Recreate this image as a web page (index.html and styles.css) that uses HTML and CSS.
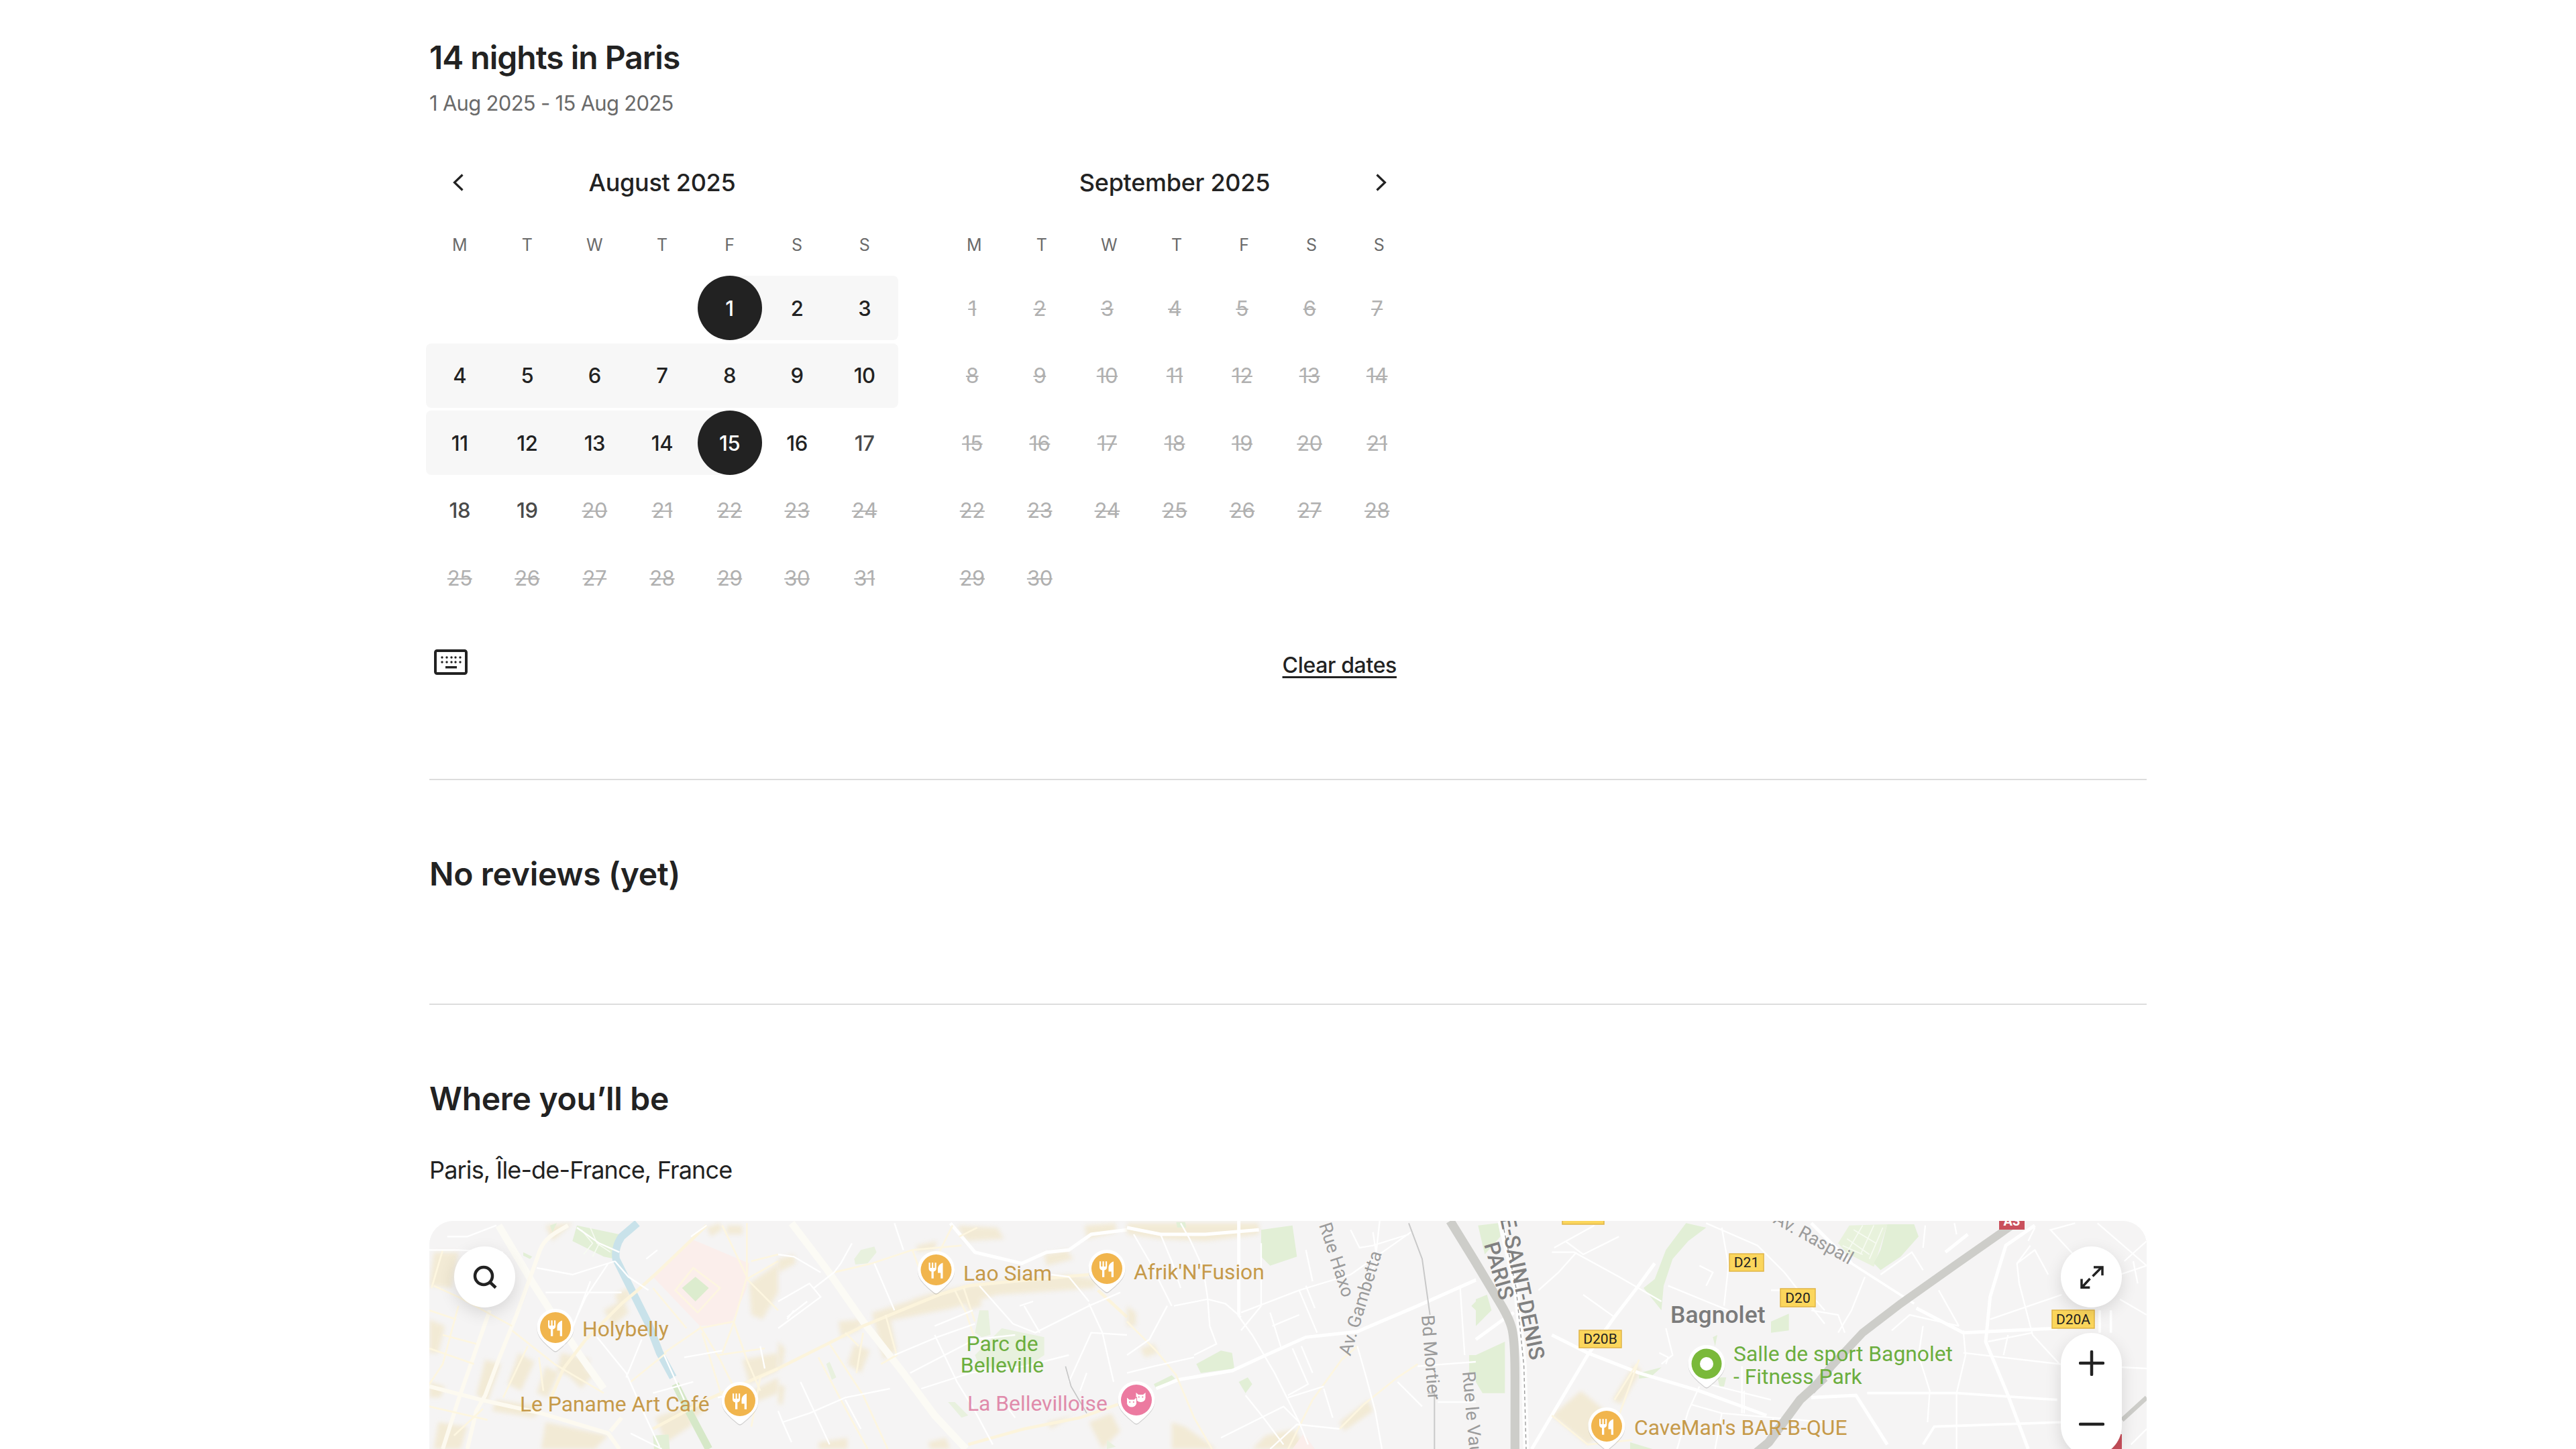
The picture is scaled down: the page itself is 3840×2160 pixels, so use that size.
FILE: index.html
```html
<!DOCTYPE html>
<html lang="en">
<head>
<meta charset="utf-8">
<title>14 nights in Paris</title>
<link rel="stylesheet" href="styles.css">
</head>
<body>
<main class="page">
  <h2 class="heading heading-title">14 nights in Paris</h2>
  <p class="subtitle">1 Aug 2025 - 15 Aug 2025</p>

  <div class="months">
    <section class="month">
      <header class="month-head">
        <svg class="chev chev-left" viewBox="0 0 16 26"><path d="M14.5 1.500 2.500 13l12 11.500"/></svg>
        <span>August 2025</span>
      </header>
      <div class="week"><span>M</span><span>T</span><span>W</span><span>T</span><span>F</span><span>S</span><span>S</span></div>
      <div class="days">
        <span class="d"></span><span class="d"></span><span class="d"></span><span class="d"></span>
        <span class="d start"><b class="sel">1</b></span>
        <span class="d range"><b>2</b></span>
        <span class="d range re"><b>3</b></span>
        <span class="d range le"><b>4</b></span><span class="d range"><b>5</b></span><span class="d range"><b>6</b></span><span class="d range"><b>7</b></span><span class="d range"><b>8</b></span><span class="d range"><b>9</b></span><span class="d range re"><b>10</b></span>
        <span class="d range le"><b>11</b></span><span class="d range"><b>12</b></span><span class="d range"><b>13</b></span><span class="d range"><b>14</b></span>
        <span class="d end"><b class="sel">15</b></span>
        <span class="d"><b>16</b></span><span class="d"><b class="soft">17</b></span>
        <span class="d"><b class="soft">18</b></span><span class="d"><b class="soft">19</b></span>
        <span class="d"><s>20</s></span><span class="d"><s>21</s></span><span class="d"><s>22</s></span><span class="d"><s>23</s></span><span class="d"><s>24</s></span>
        <span class="d"><s>25</s></span><span class="d"><s>26</s></span><span class="d"><s>27</s></span><span class="d"><s>28</s></span><span class="d"><s>29</s></span><span class="d"><s>30</s></span><span class="d"><s>31</s></span>
      </div>
    </section>
    <section class="month">
      <header class="month-head">
        <span>September 2025</span>
        <svg class="chev chev-right" viewBox="0 0 16 26"><path d="M1.500 1.500 13.500 13l-12 11.500"/></svg>
      </header>
      <div class="week week-shift"><span>M</span><span>T</span><span>W</span><span>T</span><span>F</span><span>S</span><span>S</span></div>
      <div class="days">
        <span class="d"><s>1</s></span><span class="d"><s>2</s></span><span class="d"><s>3</s></span><span class="d"><s>4</s></span><span class="d"><s>5</s></span><span class="d"><s>6</s></span><span class="d"><s>7</s></span>
        <span class="d"><s>8</s></span><span class="d"><s>9</s></span><span class="d"><s>10</s></span><span class="d"><s>11</s></span><span class="d"><s>12</s></span><span class="d"><s>13</s></span><span class="d"><s>14</s></span>
        <span class="d"><s>15</s></span><span class="d"><s>16</s></span><span class="d"><s>17</s></span><span class="d"><s>18</s></span><span class="d"><s>19</s></span><span class="d"><s>20</s></span><span class="d"><s>21</s></span>
        <span class="d"><s>22</s></span><span class="d"><s>23</s></span><span class="d"><s>24</s></span><span class="d"><s>25</s></span><span class="d"><s>26</s></span><span class="d"><s>27</s></span><span class="d"><s>28</s></span>
        <span class="d"><s>29</s></span><span class="d"><s>30</s></span>
      </div>
    </section>
  </div>

  <div class="cal-foot">
    <svg class="kbd" viewBox="0 0 50 38">
      <rect class="kbd-frame" x="2" y="2" width="46" height="34" rx="2.500"/>
      <g class="kbd-keys">
        <circle cx="12" cy="12" r="1.700"/><circle cx="19" cy="12" r="1.700"/><circle cx="26" cy="12" r="1.700"/><circle cx="32" cy="12" r="1.700"/><circle cx="39" cy="12" r="1.700"/>
        <circle cx="12" cy="19" r="1.700"/><circle cx="19" cy="19" r="1.700"/><circle cx="26" cy="19" r="1.700"/><circle cx="32" cy="19" r="1.700"/><circle cx="39" cy="19" r="1.700"/>
        <rect x="17" y="25" width="17" height="3.400"/>
      </g>
    </svg>
    <a class="clear">Clear dates</a>
  </div>

  <hr class="rule rule-a">
  <h2 class="heading heading-reviews">No reviews (yet)</h2>
  <hr class="rule rule-b">
  <h2 class="heading heading-where">Where you’ll be</h2>
  <p class="place">Paris, Île-de-France, France</p>

  <div class="map">
    <svg class="map-art" viewBox="640 1820 2560 400">
      <defs>
        <filter id="soft" x="-10%" y="-10%" width="120%" height="120%"><feGaussianBlur stdDeviation="10"/></filter>
        <path id="drop" d="M0-28c15.500 0 27.500 12.500 27.500 28 0 12-8 19-15 26L3 34c-1.700 1.500-4.300 1.500-6 0l-9.500-8c-7-7-15-14-15-26C-27.500-15.500-15.500-28 0-28z"/>
        <g id="pin-base">
          <use href="#drop" class="pin-shadow" y="1.500"/>
          <use href="#drop" class="pin-white"/>
        </g>
        <g id="pin-food">
          <use href="#pin-base"/>
          <circle r="23" class="pin-orange"/>
          <path class="pin-white" d="M-11-10.700h2.200V-3h2.300v-7.700h2.200V-3h2.300v-7.700h2.200V-2c0 2.500-1.600 4-3.900 4.600V12.700H-7V2.600C-9.400 2-11 .5-11-2z"/>
          <path class="pin-white" d="M10-10.500V12.700H6.700V4.500H2.500V-1C2.500-6 6-9.500 10-10.500z"/>
        </g>
        <g id="cat">
          <path class="cat-head" d="M-7.500-7.500-3.500-4h7l4-3.500V1c0 4-3.500 7-7.500 7s-7.500-3-7.500-7z"/>
          <circle class="pin-pink" cx="-2.800" cy="0" r="1.100"/>
          <circle class="pin-pink" cx="2.800" cy="0" r="1.100"/>
        </g>
      </defs>

      <rect class="land" x="640" y="1820" width="2560" height="400"/>

      <!-- panel 1 : 640..1160 -->
      <g transform="translate(640 1820) scale(.33333)">
        <g class="tint" filter="url(#soft)">
          <path d="M20 140h110l-30 160-100-10zM250 620l70 20-60 170-50-30zM590 590l130 30-60 90-90-40zM780 400l90-50 20 60-70 60zM40 900l130 20-30 100H20zM520 900l280 60-60 60H500zM640 10l-90 80-30-70zM1010 880l190-70 30 40-180 120zM1400 620l160-30v80l-130 60zM1430 280l130-90v130l-70 120-50-20zM1330 20h70v40h-70z"/>
          <path d="M0 720l70 20-20 50H0zM300 800l200 30-30 50-190-30zM400 590l70 40-60 130-60-30zM520 650l60 30-50 110-50-20zM660 620l70 70-50 60-60-60zM0 440l70 30-30 120H0zM830 330l60-30 10 40-50 50zM1030 930l120-60 30 40-120 80zM1440 760l120-60v70l-100 40zM1240 30l60-20 10 30-50 30z"/>
        </g>
        <path class="pinkzone" d="M1170 80l260 110-10 110-70 160-140 10-210-220z"/>
        <g class="parks">
          <path d="M640 90l20-70 190 40-20 110-50-10z"/>
          <path class="park-in" d="M1190 250l60 50-60 60-60-60z"/>
          <path d="M420 140l40 20-10 10-30-15zM540 20l30-10-20 40z"/>
          <path d="M1000 960l70-5 5 65h-70z"/>
        </g>
        <path class="c-thin" d="M680 40l50 60-40 50M720 30l30 70 60 40M760 100l-30 60"/>
        <path class="water" d="M930 10l-70 60c-22 30-30 70-25 100l45 90 40 80 60 120 50 130 60 110"/>
        <path class="canal" d="M1100 730l60 120 90 170"/>
        <g class="a">
          <path d="M310 20l160 270 90 140 120 180 100 140"/>
        </g>
        <g class="b">
          <path d="M620 20c-50 30-100 50-125 110l-25 70-80 220-80 200-60 160-40 70-40 170"/>
          <path d="M270 400l-70 200-70 200-70 220"/>
          <path d="M0 740l230 60 270 60 300 90 50 70"/>
          <path d="M810 940l50-60"/>
        </g>
        <g class="cw">
          <path d="M1000 930l240-130 320-140"/>
          <path d="M1240 20l-220 210-100 90-60 50-160 160-100 130-60 140"/>
        </g>
        <g class="c">
          <path d="M1310 20l110 230-60 210-50 130M1420 260l140-80M1420 260l140 140M1360 450l60 170 60 140M1210 470l90 150 60 120M1050 590l160-110 150-30M900 720l160-130"/>
          <path d="M20 290l110 50 240 130M0 400l120 40M60 130l-50 170M130 380l-70 260-60 90M0 570l200 70M60 510l150 40M370 490l190 150 220 130M440 560l-110 230M490 610l20 150M1180 210l-80 100 100 100 100-110zM1420 10v240"/>
          <path d="M1220 500l80 260 80 140M1560 660l-80 40-40 220M1290 600l210-30M1000 300l150 180M1440 180l120-30M0 830l260 60M110 960l130-120"/>
        </g>
        <g class="s">
          <path d="M480 210l160 30 190-60M520 320l340 0M720 270l-80 210M800 190L700 340 600 560M0 130h130l200 10M80 70h90l130-50M750 520l130 160 80 180 70 150M950 530l-70 170M1050 600l90 200M1020 130l-50 40M1240 20l-70 50M660 30l100 70 90 40M830 180l60 70 90 60"/>
          <path d="M1140 610l170-30M1000 770l180-50M1290 790l140-30M1500 660l-20-100M900 950l140 70"/>
        </g>
      </g>

      <!-- panel 2 : 1160..1680 -->
      <g transform="translate(1160 1820) scale(.33333)">
        <g class="tint" filter="url(#soft)">
          <path d="M0 170l70-20 10 40-80 40zM620 110l90-20-10 40-80 10zM800 20l180 10 30 50-170 10zM420 410l320-100 210-40 350-30 120 20v40l-440 30-200 60-350 70zM270 450l110-10-20 50-80 30zM340 550l70 30-40 100-60-40zM0 540l30 30-10 80H0zM1190 150l100-20 30 40-120 30zM1370 20l140-10v40l-130 30zM1390 900l100-40 40 80-80 80zM180 990l130-20v50H180zM670 990l80-20 20 50h-90zM0 730l30 10-10 80H0zM1200 900l120-30-100 60z"/>
          <path d="M430 450l70-20 30 150-60 40zM600 350l100-30 10 50-100 30zM820 310l70-20 20 90-60 20z"/>
        </g>
        <g class="parks pale">
          <path d="M340 170l30-40 60-15 10 25-40 50-55 5z"/>
          <path d="M900 400h40l10 110-40 10-30-20z"/>
          <path d="M880 600l120-120 190 40v80l-90 60-200-10z"/>
          <path d="M760 810h30l60 60-30 10z"/>
          <path d="M230 630l30 70-20 10-25-70z"/>
          <path d="M1470 980l40 30-40 10z"/>
        </g>
        <path class="a" d="M60 10l160 210 160 230 180 230 140 190 140 150"/>
        <g class="cw">
          <path d="M0 660l380-190 340-140 130-40 200-20 340-30"/>
          <path d="M850 1000l250-70 250-50 170-60"/>
          <path d="M1430 310l130 120"/>
        </g>
        <g class="w">
          <path d="M770 10l110 130 210 50 110-50 100-10 100-70 160-20"/>
        </g>
        <g class="c">
          <path d="M380 500l-30 180M300 500l60 60M480 420l50 180-70 40M230 550l150 230 110 240M180 610l100 190 120 220M830 300l50 150M720 140l60-120M790 310l50 100 40 120M810 70l80-40"/>
          <path d="M600 130l30 80M250 230l170-40 180-60 220-20"/>
        </g>
        <g class="s">
          <path d="M520 10l40 120M430 190l90 210M330 100l-50 90-30 40-90 70M0 150l70 10 120 70M900 290l150 170 100 40 240-120 140-60M1390 360l-90-110-80-10M0 480l190-140-50-60-140 80M40 430l90-70M70 400l-30 40"/>
          <path d="M20 900l120-40 160-70 200-40M60 990l-40-90-20-50M590 680l290-150 180-20M520 600l190-80 170-60M700 470l170-70M640 750l220-70 240-30 200-50M700 510l100 210 80 130 80 150M1000 800l60 80M1300 720l100-220 160 10M1390 370l60 130 50 220M1380 680l-30 80M1100 380l70 120M1080 380l60-20M100 720l130 280M300 800l70 130"/>
        </g>
        <path class="thin" d="M1285 650l25 90 70 120"/>
      </g>

      <!-- panel 3 : 1680..2200 -->
      <g transform="translate(1680 1820) scale(.33333)">
        <g class="tint" filter="url(#soft)">
          <path d="M0 10h590v50l-240 30L150 80 0 60zM0 380l40 30v60H0zM60 570l60-20 20 40-60 20zM560 1020l60-60 130-30 50 90zM950 900l130-100 20 50-130 90zM200 900l60 20 140 100H200z"/>
        </g>
        <path class="pinkzone" d="M740 1020l50-70 50 70z"/>
        <g class="parks">
          <path d="M600 40l140-20 20 140-120 40-40-40z"/>
          <path d="M310 640l110-60 50 10 10 70-150 20z"/>
          <path d="M500 720l40-20 20 30-30 40z"/>
          <path d="M120 730l80-40 15 15-85 45z"/>
          <path d="M1540 380l20-20v40zM1530 600h30v80h-30zM220 5h40l5 25h-40z"/>
        </g>
        <g class="w">
          <path d="M0 30l150 30h200l240-20"/>
          <path d="M130 750l100-40 240-40 130-60 200-90 230-25 270-115 260-115"/>
          <path d="M500 0v420"/>
        </g>
        <g class="c">
          <path d="M0 450l130 130 90 110 80 190 80 140"/>
          <path d="M1030 560l-70 60-130 180-110 220"/>
          <path d="M1300 640l-90 60-150 120-110 110"/>
        </g>
        <g class="s">
          <path d="M495 420l65 90 100 170 110 220 40 100M600 100v280M510 410l260-100 230-70 270-190M770 310l80 190M800 290l40 100M650 470l120-50M640 410l50 160M740 570l70 160-90 50M780 560l50 120M600 380l-90 110M360 340l10 130 30 80-100 50M210 380l150-30 80 20 70 60M0 680l120-30 180-40M1030 560l40 140 40 150 30 170M1210 720l110 110M1560 630l-260 20M1360 350l200-90M1490 300l20 300M1390 810h170M1100 50l20 130-80 120M1000 40l40 80 60-10 160-50M1130 0l-20 180M800 130l30 140M420 970l180-90 100-50 70 70M530 780l80 100 90 120M640 1020l120-110 190 20M180 380l-80 150-100 70M30 60l70 120 100 200M150 60l50 120 40 120M240 10l40 70 60 130 20 130M880 740l-160 50M880 750l40 130"/>
        </g>
        <path class="thin-mid" d="M1260 10l60 160 35 250M1345 770h30v250"/>
      </g>

      <!-- panel 4 : 2200..2720 -->
      <g transform="translate(2200 1820) scale(.33333)">
        <g class="tint" filter="url(#soft)">
          <path d="M340 870l130-110 170 140-140 100zM610 800l100-160 30 30-90 150z"/>
        </g>
        <g class="parks">
          <path d="M10 20l90-10 10 60-70 80z"/>
          <path d="M0 350l50-20 20 70-70 70z"/>
          <path d="M0 600l130-60v230H30L0 720z"/>
          <path d="M750 300l50-40 50-130 90-120 90 20-80 60-70 80-40 120-10 110z"/>
          <path d="M1320 450l80-35v75l-80 10z"/>
          <path d="M730 680l100-25-50 45-50 5zM1060 520l20-10-10 50zM1080 700h40l-10 40h-20zM690 990l100 30H690z"/>
        </g>
        <path class="w" d="M0 530l110-80 60-40"/>
        <path class="a-thin" d="M110 0l70 300 35 350 10 370"/>
        <path class="dash" d="M120 10l60 290 35 350 10 370"/>
        <path class="hwy" d="M-115 0L-10 170l120 200c30 50 50 90 55 130 10 60 10 130 10 200v320"/>
        <g class="w">
          <path d="M250 1020l250-420 120-170 100-130 80-110"/>
          <path d="M340 510l160 80 230 90 270 80 300 110"/>
        </g>
        <g class="c">
          <path d="M730 620l-90 250M620 800l100-160M340 870l160 130 200-20"/>
        </g>
        <g class="s">
          <path d="M350 120l180-100M340 140h100l200 110 190 110M400 90l80 60 160-80M1000 740l-50 110-50 170M1190 650v210M1000 720l320 80M860 290l270 110M1030 10l230 100 120 120 180 230M1100 30l30 170-20 180M1320 310h160l80 90M280 310l90-80 80-90M480 330l140 100M850 480l30 120-50 40M960 820l140 40 230 20 230 20M1200 760v100M1100 860l-30 160M1330 880l-20 140M1000 200l60 30-30 60M820 590l40 20-10 30"/>
        </g>
        <path class="hwy" d="M1250 1040l60-50 140-190 110-100"/>
      </g>

      <!-- panel 5 : 2700..3200 -->
      <g transform="translate(2700 1820) scale(.33333)">
        <g class="parks">
          <path class="park-grid" d="M120 100l50-80 170-5-60 190-60-30-60-30z"/>
          <path d="M340 15h120l20 55-80 90-90 60-30-30 30-60z"/>
        </g>
        <path class="c-thin" d="M190 40l100 60M160 80l100 70M140 110l90 40M230 20l-70 120M280 20l-60 130M320 30l-60 140"/>
        <g class="w">
          <path d="M1000 20L870 110l-70 230-20 200 100 240 90 240"/>
          <path d="M700 60l-100 80M470 390l210 110 420-20"/>
          <path d="M0 790l200-10 140 220"/>
          <path d="M0 10l180 180"/>
        </g>
        <g class="s-wide">
          <path d="M180 190l280 180M500 1000l50-80 570-20M1290 400v100M1340 400v100M250 770h400l450 30"/>
        </g>
        <g class="s">
          <path d="M310 240l140-100 50 80M240 250l-60 150-60 100M360 490l80-70 220 50M500 470l-20 130 50 160-10 140M680 490l10 110-40 170v250M570 310l90 160M1180 10l-110 30 130 140M920 190l80-60 60 110M800 440l320-110M930 280l60 230 120 130 390 20M980 110l-60 80 10 90M790 540l200-40M680 590l430 50M880 510l-20 90M1380 350l120 70M1380 240l120-40M1400 180l100-90M1280 10l220 190M640 10l10 50M510 20l-10 100M1430 1000l70-70M1440 180l20 100M1000 30l-30 60M0 400l120 20 30 80"/>
        </g>
        <path class="hwy-a3" d="M890 25L640 200 400 370 230 500 90 650 0 760"/>
        <path class="hwy-slim" d="M1390 890l110-100"/>
      </g>

      <rect class="shield" x="2329" y="1810" width="62" height="15"/>
      <rect class="shield-a" x="2980" y="1808" width="38" height="25"/>
      <text class="shield-a-txt" x="2999" y="1827">A3</text>
      <rect class="shield-a" x="3120" y="2138" width="43" height="30"/>
      <g>
        <rect class="shield" x="2578" y="1869" width="51" height="26"/><text class="shield-txt" x="2603.500" y="1889">D21</text>
        <rect class="shield" x="2654" y="1921" width="52" height="27"/><text class="shield-txt" x="2680" y="1941.500">D20</text>
        <rect class="shield" x="2354" y="1983" width="63" height="26"/><text class="shield-txt" x="2385.500" y="2003">D20B</text>
        <rect class="shield" x="3059" y="1953" width="63" height="27"/><text class="shield-txt" x="3090.500" y="1973.500">D20A</text>
      </g>

      <text class="label road" transform="translate(1966 1826) rotate(72)">Rue Haxo</text>
      <text class="label road" transform="translate(2013 2022) rotate(-73)">Av. Gambetta</text>
      <text class="label road" transform="translate(2119 1961) rotate(85.500)">Bd Mortier</text>
      <text class="label road" transform="translate(2180 2045) rotate(85)">Rue le Vaulx</text>
      <text class="label road" transform="translate(2642 1822) rotate(29)">Av. Raspail</text>
      <text class="label town-road" transform="translate(2236 1816) rotate(78)">E-SAINT-DENIS</text>
      <text class="label town-road" transform="translate(2212 1855) rotate(74)">PARIS</text>
      <text class="label town" x="2490" y="1971.500">Bagnolet</text>

      <use href="#pin-food" x="828" y="1979"/>
      <text class="label food" x="868" y="1991.500">Holybelly</text>
      <use href="#pin-food" x="1103" y="2088"/>
      <text class="label food" x="775" y="2104">Le Paname Art Café</text>
      <use href="#pin-food" x="1395.500" y="1893"/>
      <text class="label food" x="1436" y="1909">Lao Siam</text>
      <use href="#pin-food" x="1650" y="1891"/>
      <text class="label food" x="1690" y="1907">Afrik'N'Fusion</text>
      <use href="#pin-food" x="2395" y="2126"/>
      <text class="label food" x="2436" y="2139">CaveMan's BAR-B-QUE</text>

      <text class="label park-label mid" x="1494" y="2014">Parc de</text>
      <text class="label park-label mid" x="1494" y="2046">Belleville</text>

      <g transform="translate(1694 2087)">
        <use href="#pin-base"/>
        <circle r="23" class="pin-pink"/>
        <use href="#cat" x="6.500" y="-4.500"/>
        <use href="#cat" x="-7" y="3"/>
      </g>
      <text class="label pink" x="1442" y="2103">La Bellevilloise</text>

      <g transform="translate(2544 2033)">
        <use href="#pin-base"/>
        <circle class="pin-green" r="22.500"/>
        <circle class="pin-white" r="10"/>
      </g>
      <text class="label park-label" x="2584" y="2029">Salle de sport Bagnolet</text>
      <text class="label park-label" x="2584" y="2063">- Fitness Park</text>
    </svg>

    <button class="map-btn btn-search">
      <svg viewBox="0 0 36 36"><circle cx="16" cy="16" r="13"/><path d="M25.500 25.500 34 33.500"/></svg>
    </button>
    <button class="map-btn btn-expand">
      <svg viewBox="0 0 36 36"><path d="M21 3h13v12.300M33 3 19.500 16.500M3 20.600v12.700h12.300M3.500 33 15.500 20"/></svg>
    </button>
    <div class="zoom-pill">
      <svg class="zoom-ico zoom-plus" viewBox="0 0 38 38"><path d="M19 2v34M2 19h34"/></svg>
      <svg class="zoom-ico zoom-minus" viewBox="0 0 38 38"><path d="M2 19h34"/></svg>
    </div>
  </div>
</main>
</body>
</html>
```

FILE: styles.css
```css
html, body {
  margin: 0;
  height: 100%;
  overflow: hidden;
  background: #fff;
}

body {
  font-family: "Inter", "Liberation Sans", sans-serif;
  color: #222;
}

.page {
  width: 2560px;
  margin: 0 auto;
  padding-top: 56px;
}

.heading {
  margin: 0;
  font-size: 48px;
  line-height: 60px;
  font-weight: 600;
  letter-spacing: -.3px;
  color: #222;
}

.heading-title {
  letter-spacing: -1px;
}

.heading-reviews {
  margin-top: 110px;
}

.heading-where {
  margin-top: 110px;
}

.subtitle {
  margin: 18px 0 0;
  font-size: 31px;
  line-height: 40px;
  letter-spacing: -.7px;
  color: #6a6a6a;
}

.months {
  display: flex;
  gap: 60px;
  width: 1468px;
  margin: 68px 0 0 -5px;
}

.month {
  width: 704px;
}

.month-head {
  position: relative;
  height: 60px;
  display: flex;
  align-items: center;
  justify-content: center;
  font-size: 36px;
  font-weight: 500;
  letter-spacing: -.3px;
}

.chev {
  position: absolute;
  top: 17px;
  width: 16px;
  height: 26px;
  fill: none;
  stroke: #222;
  stroke-width: 3.200;
}

.chev-left { left: 40px; }
.chev-right { right: 36px; }

.week {
  display: grid;
  grid-template-columns: repeat(7, 1fr);
  margin-top: 48px;
  height: 30px;
  font-size: 25px;
  line-height: 30px;
  font-weight: 400;
  text-align: center;
  color: #6a6a6a;
}

.week-shift {
  transform: translateX(3px);
}

.days {
  display: grid;
  grid-template-columns: repeat(7, 1fr);
  grid-auto-rows: 96px;
  row-gap: 4.500px;
  margin-top: 31px;
}

.d {
  display: flex;
  align-items: center;
  justify-content: center;
  font-size: 31px;
  letter-spacing: -.4px;
}

.d b {
  width: 96px;
  height: 96px;
  border-radius: 50%;
  display: flex;
  align-items: center;
  justify-content: center;
  font-weight: 500;
  color: #222;
}

.d b.soft {
  color: #4a4a4a;
}

.d b.sel {
  background: #222;
  color: #fff;
}

.d s {
  color: #b0b0b0;
  font-weight: 400;
  text-decoration-thickness: 2px;
}

.range {
  background: #f7f7f7;
}

.le {
  border-radius: 8px 0 0 8px;
}

.re {
  border-radius: 0 8px 8px 0;
}

.start {
  background: linear-gradient(to right, transparent 50%, #f7f7f7 50%);
}

.end {
  background: linear-gradient(to right, #f7f7f7 50%, transparent 50%);
}

.cal-foot {
  display: flex;
  justify-content: space-between;
  align-items: flex-start;
  width: 1442px;
  margin-top: 59px;
  box-sizing: border-box;
  padding-left: 7px;
}

.kbd {
  width: 50px;
  height: 38px;
}

.kbd-frame {
  fill: #fff;
  stroke: #222;
  stroke-width: 4;
}

.kbd-keys {
  fill: #222;
}

.clear {
  margin-top: 4px;
  font-size: 32px;
  line-height: 40px;
  font-weight: 500;
  letter-spacing: -.35px;
  text-decoration: underline;
  text-decoration-thickness: 2.500px;
  text-underline-offset: 5px;
  color: #222;
}

.rule {
  height: 2px;
  margin: 0;
  border: 0;
  background: #ddd;
}

.rule-a { margin-top: 149px; }
.rule-b { margin-top: 163px; }

.place {
  margin: 56px 0 0;
  font-size: 36px;
  line-height: 40px;
  letter-spacing: -.85px;
  color: #222;
}

.map {
  position: relative;
  height: 400px;
  margin-top: 56px;
  border-radius: 36px;
  overflow: hidden;
  background: #f5f5f5;
}

.map-art {
  display: block;
  width: 2560px;
  height: 400px;
}

/* map drawing: road widths are in the 3x units of the traced panels */
.land { fill: #f5f4f4; }
.tint { fill: #f2e9d2; opacity: .9; }
.pinkzone { fill: #fbeeeb; }
.parks { fill: #e2efd6; }
.parks.pale { fill: #e8f1de; }
.park-in { fill: #dcecce; }
.park-grid { fill: #e8f2dc; }
.water { fill: none; stroke: #c9e2ea; stroke-width: 34; }
.canal { fill: none; stroke: #d6e8c8; stroke-width: 34; }
.c-thin { fill: none; stroke: #f7fbf2; stroke-width: 5; }

.a, .a-thin, .b, .cw, .w, .c, .s, .s-wide, .thin, .thin-mid, .hwy, .hwy-a3, .hwy-slim, .dash {
  fill: none;
}

.a { stroke: #fcfbf5; stroke-width: 32; }
.a-thin { stroke: #fdfdfd; stroke-width: 26; }
.b { stroke: #fdfaf0; stroke-width: 18; }
.cw { stroke: #fcf4dc; stroke-width: 14; }
.w { stroke: #fff; stroke-width: 15; }
.c { stroke: #fdf6e0; stroke-width: 8; }
.s { stroke: #fff; stroke-width: 7; }
.s-wide { stroke: #fff; stroke-width: 11; }
.thin { stroke: #c6c6c6; stroke-width: 5; }
.thin-mid { stroke: #c8c8c8; stroke-width: 6; }
.hwy { stroke: #cdcdc9; stroke-width: 40; }
.hwy-a3 { stroke: #cdcdc9; stroke-width: 36; }
.hwy-slim { stroke: #cdcdc9; stroke-width: 20; }
.dash { stroke: #999; stroke-width: 4; stroke-dasharray: 16 12; }

.shield { fill: #fbd65c; stroke: #e0b445; stroke-width: 1.500; }
.shield-txt {
  font: 400 21px "Roboto", sans-serif;
  fill: #222;
  text-anchor: middle;
}
.shield-a { fill: #c9505c; }
.shield-a-txt {
  font: 700 20px "Roboto", sans-serif;
  fill: #fff;
  text-anchor: middle;
}

.label { font-family: "Roboto", "Liberation Sans", sans-serif; }
.food { font-size: 31.8px; fill: #c69a4a; }
.pink { font-size: 31.8px; fill: #e08bab; }
.park-label { font-size: 31.8px; fill: #6cae3e; }
.mid { text-anchor: middle; }
.road { font-size: 27px; fill: #9b9b9b; }
.town-road { font-size: 32px; font-weight: 500; fill: #808080; }
.town { font-size: 35.5px; font-weight: 500; fill: #7b7b7b; }

.pin-white { fill: #fff; }
.pin-shadow { fill: #000; opacity: .15; }
.pin-orange { fill: #f1b54d; }
.pin-pink { fill: #ec7aa0; }
.pin-green { fill: #7ab93a; }
.cat-head { fill: #fff; stroke: #ec7aa0; stroke-width: 1; }

/* map controls */
.map-btn {
  position: absolute;
  top: 38px;
  width: 91px;
  height: 91px;
  padding: 0;
  border: 0;
  border-radius: 50%;
  background: #fff;
  box-shadow: 0 8px 24px rgba(0, 0, 0, .12);
  display: flex;
  align-items: center;
  justify-content: center;
}

.btn-search { left: 37px; }
.btn-expand { right: 37px; }

.map-btn svg {
  width: 36px;
  height: 36px;
  fill: none;
  stroke: #222;
}

.btn-search svg { stroke-width: 4.500; }
.btn-expand svg { stroke-width: 3.500; }

.zoom-pill {
  position: absolute;
  top: 167px;
  right: 37px;
  width: 91px;
  height: 184px;
  border-radius: 45.5px;
  background: #fff;
  box-shadow: 0 8px 24px rgba(0, 0, 0, .12);
}

.zoom-ico {
  position: absolute;
  left: 26.5px;
  width: 38px;
  height: 38px;
  fill: none;
  stroke: #222;
  stroke-width: 4.500;
  stroke-linecap: round;
}

.zoom-plus { top: 26px; }
.zoom-minus { top: 117px; }
```
